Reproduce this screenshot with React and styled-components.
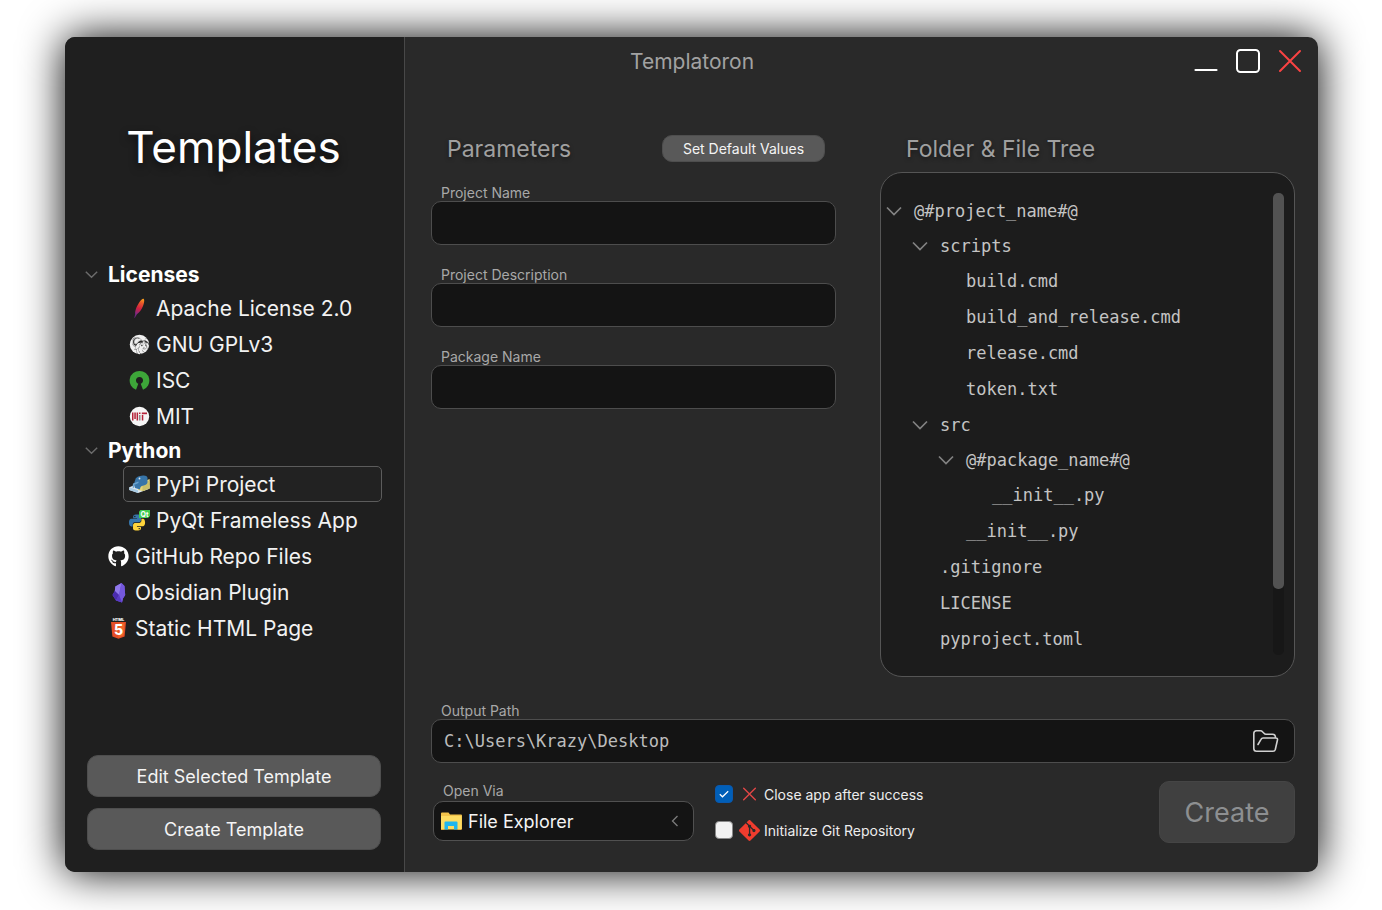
import React, { useState } from "react";
import styled, { createGlobalStyle, css } from "styled-components";
import { FaGithub } from "react-icons/fa";
import { SiGit, SiGnu } from "react-icons/si";

const sans = `Inter, "Liberation Sans", sans-serif`;
const mono = `"DejaVu Sans Mono", "Liberation Mono", monospace`;

const GlobalStyle = createGlobalStyle`
  *, *::before, *::after { box-sizing: border-box; }
  body { margin: 0; background: #ffffff; font-family: ${sans}; }
  button, input, select { font: inherit; color: inherit; margin: 0; }
  h1, h2, p, ul { margin: 0; padding: 0; font-weight: 400; }
  ul { list-style: none; }
`;

const Desktop = styled.div`
  display: flex;
  min-height: 100vh;
  padding: 37px 64px 38px 65px;
`;

const Window = styled.div`
  flex: 1;
  display: grid;
  grid-template-columns: 340px minmax(0, 1fr);
  border-radius: 10px;
  overflow: hidden;
  background: #292929;
  box-shadow: 0 0 44px #000000;
`;

/* ---------- Sidebar ---------- */

const Sidebar = styled.aside`
  display: flex;
  flex-direction: column;
  padding: 80px 22px 22px 20px;
  background: #1f1f1f;
  border-right: 1px solid #484848;
`;

const SidebarTitle = styled.h1`
  height: 60px;
  margin-bottom: 81px;
  font-size: 44px;
  line-height: 60px;
  text-align: center;
  color: #ffffff;
  text-shadow: 0 4px 8px rgba(0, 0, 0, 0.6);
`;

const TemplateList = styled.ul`
  flex: 1;
  font-size: 21px;
  color: #f2f2f2;
`;

const GroupButton = styled.button`
  display: flex;
  align-items: center;
  gap: 10px;
  height: 32px;
  padding: 0;
  border: 0;
  background: none;
  font-weight: 700;
  color: #ffffff;
`;

const TemplateItem = styled.li`
  padding-left: ${(p) => (p.$nested ? 38 : 17)}px;
`;

const TemplateButton = styled.button`
  display: flex;
  align-items: center;
  gap: 6px;
  width: 100%;
  height: 36px;
  padding: 0 5px;
  border: 1px solid ${(p) => (p.$selected ? "#5c5c5c" : "transparent")};
  border-radius: 5px;
  background: ${(p) => (p.$selected ? "#222222" : "none")};
  white-space: nowrap;

  svg {
    flex: none;
  }
`;

const SidebarActions = styled.div`
  display: grid;
  gap: 11px;
  padding: 0 1px 0 2px;
`;

const buttonFace = css`
  border: 1px solid #4e4e4e;
  background: #595959;
  color: #f4f4f4;
`;

const ActionButton = styled.button`
  ${buttonFace}
  height: 42px;
  border-radius: 11px;
  font-size: 18px;
`;

/* ---------- Main area ---------- */

const Main = styled.main`
  display: flex;
  flex-direction: column;
  min-width: 0;
  padding: 0 23px 29px 26px;
`;

const TitleBar = styled.header`
  display: flex;
  align-items: center;
  justify-content: space-between;
  height: 48px;
  padding-left: 199px;
`;

const AppTitle = styled.p`
  font-size: 21px;
  color: #a2a2a2;
`;

const WindowControls = styled.div`
  display: flex;
  gap: 18px;
  margin-right: -7px;
`;

const ControlButton = styled.button`
  display: flex;
  padding: 0;
  border: 0;
  background: none;
`;

const Columns = styled.div`
  flex: 1;
  display: grid;
  grid-template-columns: minmax(0, 405fr) minmax(0, 415fr);
  gap: 44px;
  padding: 50px 0 24px;
`;

const Column = styled.section`
  display: flex;
  flex-direction: column;
`;

const ColumnHead = styled.div`
  display: flex;
  align-items: center;
  justify-content: space-between;
  height: 27px;
  margin-bottom: ${(p) => p.$gap}px;
  padding: 0 11px 0 ${(p) => p.$inset}px;
`;

const Heading = styled.h2`
  font-size: 23px;
  line-height: 28px;
  color: #a0a0a0;
  text-shadow: 0 2px 4px rgba(0, 0, 0, 0.4);
`;

const SmallButton = styled.button`
  ${buttonFace}
  width: 163px;
  height: 27px;
  padding: 0;
  border-radius: 10px;
  font-size: 14px;
`;

const Field = styled.div`
  display: flex;
  flex-direction: column;
  margin-bottom: ${(p) => p.$after || 0}px;
`;

const FieldLabel = styled.label`
  height: 18px;
  padding-left: 10px;
  font-size: 14px;
  line-height: 20px;
  color: #a8a8a8;
`;

const FieldBox = styled.div`
  display: flex;
  align-items: center;
  height: 44px;
  padding: 0 15px 0 12px;
  border: 1px solid #4d4d4d;
  border-radius: 10px;
  background: #141414;
`;

const TextInput = styled.input`
  flex: 1;
  min-width: 0;
  padding: 0;
  border: 0;
  outline: 0;
  background: none;
  font-family: ${mono};
  font-size: 17px;
  color: #bcbcbc;
`;

const IconButton = styled.button`
  display: flex;
  padding: 0;
  border: 0;
  background: none;
`;

/* ---------- File tree ---------- */

const TreePanel = styled.div`
  flex: 1;
  display: flex;
  padding: 20px 10px 16px 5px;
  border: 1px solid #555555;
  border-radius: 22px;
  background: #1c1c1c;
`;

const TreeList = styled.ul`
  flex: 1;
  font-family: ${mono};
  font-size: 17px;
  color: #c4c4c4;
`;

const TreeRow = styled.li`
  display: flex;
  align-items: center;
  gap: 12px;
  height: ${(p) => (p.$folder ? 35 : 36)}px;
  padding-left: ${(p) => p.$depth * 26 + (p.$folder ? 0 : 28)}px;
  white-space: nowrap;
`;

const ScrollTrack = styled.div`
  width: 11px;
  height: 462px;
  border-radius: 5px;
  background: #171717;
`;

const ScrollThumb = styled.div`
  height: 396px;
  border-radius: 5px;
  background: #525252;
`;

/* ---------- Footer ---------- */

const Footer = styled.div`
  display: flex;
  align-items: flex-start;
  margin-top: 18px;
`;

const OpenVia = styled.div`
  width: 261px;
  margin: 0 21px 0 2px;
`;

const SelectBox = styled.div`
  display: flex;
  align-items: center;
  gap: 6px;
  height: 40px;
  margin-top: 2px;
  padding: 0 13px 0 6px;
  border: 1px solid #505050;
  border-radius: 10px;
  background: #141414;
`;

const Select = styled.select`
  flex: 1;
  min-width: 0;
  appearance: none;
  padding: 0;
  border: 0;
  outline: 0;
  background: none;
  font-size: 18px;
  color: #f4f4f4;
`;

const Options = styled.div`
  flex: 1;
  display: flex;
  flex-direction: column;
  align-items: flex-start;
  padding-top: 2px;
  gap: 14px;
`;

const OptionLabel = styled.label`
  display: flex;
  align-items: center;
  height: 22px;
  font-size: 14px;
  color: #ededed;

  > svg {
    width: 21px;
    margin: 0 4px 0 6px;
  }
`;

const CheckCell = styled.span`
  display: grid;
  place-items: center;

  > * {
    grid-area: 1 / 1;
  }

  svg {
    pointer-events: none;
  }
`;

const CheckInput = styled.input`
  appearance: none;
  width: 18px;
  height: 18px;
  border: 1px solid #8a8a8a;
  border-radius: 4px;
  background: #f3f3f3;

  &:checked {
    border-color: #0a58ad;
    background: #005fb8;
  }
`;

const CreateButton = styled.button`
  width: 136px;
  height: 62px;
  border: 1px solid #454545;
  border-radius: 10px;
  background: #404040;
  font-size: 27px;
  color: #8d8f91;
`;

/* ---------- Icons ---------- */

const Chevron = ({ size = 16, color = "#828282" }) => (
  <svg width={size} height={size} viewBox="0 0 16 16" fill="none" stroke={color} strokeWidth="1.7">
    <path d="M1 4.5l7 7 7-7" />
  </svg>
);

const ApacheIcon = () => (
  <svg width="21" height="21" viewBox="0 0 21 21">
    <defs>
      <linearGradient id="feather" x1="14" y1="1" x2="6" y2="20" gradientUnits="userSpaceOnUse">
        <stop offset="0" stopColor="#f9a11b" />
        <stop offset="0.2" stopColor="#ea5a2a" />
        <stop offset="0.5" stopColor="#d2203f" />
        <stop offset="0.8" stopColor="#7d2a86" />
        <stop offset="1" stopColor="#5a2070" />
      </linearGradient>
    </defs>
    <path d="M14.6.8c1 .7.8 4-.7 7.4-1.4 3.3-3.6 6.6-6 8L5.800 20l-.6-.2 1-3.6C5.800 12.500 8 7.600 10.500 4 12 1.800 13.500.4 14.600.8Z" fill="url(#feather)" />
  </svg>
);

const GnuIcon = () => (
  <svg width="21" height="21" viewBox="0 0 21 21">
    <circle cx="10.5" cy="10.5" r="9.7" fill="#f0f0f0" />
    <SiGnu x="3" y="3" width="15" height="15" color="#2a2a2a" />
  </svg>
);

const OsiIcon = () => (
  <svg width="21" height="21" viewBox="0 0 21 21">
    <path
      d="M10.5.9a9.7 9.7 0 0 0-3.5 18.8l2.300-6a3.500 3.500 0 1 1 2.400 0l2.300 6A9.700 9.700 0 0 0 10.500.9Z"
      fill="#3da639"
    />
  </svg>
);

const MitIcon = () => (
  <svg width="21" height="21" viewBox="0 0 21 21">
    <circle cx="10.5" cy="10.5" r="9.7" fill="#f6f6f6" />
    <g fill="#b5243a">
      <rect x="3" y="6.5" width="1.5" height="8" />
      <rect x="5.3" y="6.5" width="1.5" height="6.5" />
      <rect x="7.6" y="6.5" width="1.5" height="8" />
      <rect x="10" y="6.5" width="1.5" height="1.5" />
      <rect x="12.8" y="6.5" width="5.2" height="1.7" />
      <rect x="12.8" y="9" width="1.5" height="5.5" />
    </g>
    <rect x="10" y="9" width="1.5" height="5.5" fill="#8c8c8c" />
  </svg>
);

const snake =
  "M12 0C6 0 6.2 2.7 6.2 2.7v2.800h5.900v.9H3.900S0 5.900 0 12s3.400 5.800 3.400 5.800h2.100v-2.900s-.1-3.400 3.400-3.400h5.800s3.300 0 3.300-3.200V3.200S18.400 0 12 0ZM8.700 1.800a1.100 1.100 0 1 1 0 2.200 1.100 1.100 0 0 1 0-2.200Z";

const PypiIcon = () => (
  <svg width="21" height="21" viewBox="0 0 21 21">
    <path d="M.3 13.300 7 10.500l7.500 3 6-2.200v3.400L9 19 .3 16Z" fill="#dfe9f0" />
    <path d="M.3 13.300 9 16.200V19L.3 16Z" fill="#a9cbe4" />
    <path d="M9 9.500 20.600 5v9L14 17 9 16Z" fill="#e5d579" />
    <path d="M13.500 9.500 20.600 6.500V14.500L13.500 17.300Z" fill="#c9c06a" />
    <path d="M6.400 5.500C6.500 3.500 10 1.800 14 1.500c3-.2 4.500.8 4.500 2.500v4c0 2-1.500 2.800-4 3.600-2.500.8-3.500 1.500-3.500 4l-5-1.600c-1.200-2.500-1-5.500.4-8.500Z" fill="#3775a9" />
    <path d="M4 9.500 9.500 7.500v1.500L5 11v3L3.500 13.500Z" fill="#6ba3cf" />
    <circle cx="10.5" cy="4.5" r="0.9" fill="#dfe9f0" />
  </svg>
);

const PyQtIcon = () => (
  <svg width="21" height="21" viewBox="0 0 21 21">
    <g transform="translate(0 4.5) scale(.67)">
      <path d={snake} fill="#3776ab" />
      <path d={snake} fill="#ffd43b" transform="rotate(180 12 12)" />
    </g>
    <path d="M11.5 0H21v6l-2 2h-9V1.500Z" fill="#41cd52" />
    <text x="15.5" y="6.5" textAnchor="middle" fontFamily="Inter, sans-serif" fontSize="7" fontWeight="700" fill="#ffffff">
      Qt
    </text>
  </svg>
);

const ObsidianIcon = () => (
  <svg width="21" height="21" viewBox="0 0 21 21">
    <path d="M13.500 1 7.300 4.500 6.800 9 4.500 13l3.500 5.500 6 2 1-4 2.200-3.500L16.500 4Z" fill="#6c4bd8" />
    <path d="M13.500 1 7.300 4.500 6.800 9l4.200 4Z" fill="#8f78ea" />
    <path d="M4.500 13 8 18.500 11 13 6.800 9Z" fill="#4a2cae" />
    <path d="M13.500 1 11 13l3 7.500 1-4 2.200-3.500L16.500 4Z" fill="#7458dc" />
    <path d="M11 13l3 7.500-6-2Z" fill="#583ac4" />
  </svg>
);

const Html5Icon = () => (
  <svg width="21" height="21" viewBox="0 0 21 21">
    <text x="10.5" y="2.8" textAnchor="middle" fontFamily="Inter, sans-serif" fontSize="4" fontWeight="800" fill="#ffffff">
      HTML
    </text>
    <path d="M3 4h15l-1.400 14.500-6.100 2.300-6.100-2.300Z" fill="#e44d26" />
    <path d="M10.500 5.300h6l-1.100 12.200-4.900 1.900Z" fill="#f16529" />
    <text x="10.5" y="16.8" textAnchor="middle" fontFamily="Inter, sans-serif" fontSize="14" fontWeight="800" fill="#ffffff">
      5
    </text>
  </svg>
);

const ExplorerIcon = () => (
  <svg width="22" height="20" viewBox="0 0 22 20">
    <path d="M1 2.500Q1 1.500 2 1.500h6.500l1.500 2h11q1 0 1 1V18H1Z" fill="#f2c34b" />
    <path d="M1 5h20.500v13.500H1Z" fill="#fddc63" />
    <path d="M4.500 18.500V11.500q0-1 1-1h11q1 0 1 1v7H14V15H8v3.500Z" fill="#1fb6ef" />
    <path d="M1 18.500h3.500M17.500 18.500h4" stroke="#e3a93a" strokeWidth="1" />
  </svg>
);

const OpenFolderIcon = () => (
  <svg width="27" height="24" viewBox="0 0 27 24" fill="none" stroke="#d0d0d0" strokeWidth="1.6" strokeLinejoin="round" strokeLinecap="round">
    <path d="M6 15.500 9 10.300Q9.700 9 11 9H23.500Q26 9 25.400 11.300L23.300 20.500Q22.800 22.300 21 22.300H4.500Q1.800 22.300 1.800 19.500V4.500Q1.800 1.800 4.500 1.800H8.500Q9.700 1.800 10.500 2.700L12 4.300Q12.800 5.200 14 5.200H20.500Q23.500 5.200 23.500 8.800" />
  </svg>
);

const CrossIcon = ({ size, stroke, color }) => (
  <svg width={size} height={size} viewBox="0 0 24 24" stroke={color} strokeWidth={stroke} strokeLinecap="round">
    <path d="M2 2l20 20M22 2 2 22" />
  </svg>
);

/* ---------- Data ---------- */

const templates = [
  {
    group: "Licenses",
    items: [
      { name: "Apache License 2.0", Icon: ApacheIcon },
      { name: "GNU GPLv3", Icon: GnuIcon },
      { name: "ISC", Icon: OsiIcon },
      { name: "MIT", Icon: MitIcon },
    ],
  },
  {
    group: "Python",
    items: [
      { name: "PyPi Project", Icon: PypiIcon },
      { name: "PyQt Frameless App", Icon: PyQtIcon },
    ],
  },
];

const looseTemplates = [
  { name: "GitHub Repo Files", Icon: () => <FaGithub size={21} color="#ffffff" /> },
  { name: "Obsidian Plugin", Icon: ObsidianIcon },
  { name: "Static HTML Page", Icon: Html5Icon },
];

const fields = [
  { id: "project-name", label: "Project Name" },
  { id: "project-description", label: "Project Description" },
  { id: "package-name", label: "Package Name" },
];

const files = [
  { name: "@#project_name#@", depth: 0, folder: true },
  { name: "scripts", depth: 1, folder: true },
  { name: "build.cmd", depth: 2 },
  { name: "build_and_release.cmd", depth: 2 },
  { name: "release.cmd", depth: 2 },
  { name: "token.txt", depth: 2 },
  { name: "src", depth: 1, folder: true },
  { name: "@#package_name#@", depth: 2, folder: true },
  { name: "__init__.py", depth: 3 },
  { name: "__init__.py", depth: 2 },
  { name: ".gitignore", depth: 1 },
  { name: "LICENSE", depth: 1 },
  { name: "pyproject.toml", depth: 1 },
];

function TemplateEntry({ entry, nested, selected, onSelect }) {
  const { Icon, name } = entry;
  return (
    <TemplateItem $nested={nested}>
      <TemplateButton type="button" $selected={selected === name} onClick={() => onSelect(name)}>
        <Icon />
        {name}
      </TemplateButton>
    </TemplateItem>
  );
}

function Checkbox({ checked, onChange, icon, children }) {
  return (
    <OptionLabel>
      <CheckCell>
        <CheckInput type="checkbox" checked={checked} onChange={(e) => onChange(e.target.checked)} />
        {checked && (
          <svg width="10" height="10" viewBox="0 0 10 10" fill="none" stroke="#ffffff" strokeWidth="1.2">
            <path d="M.8 5.200l2.700 2.600L9.200 2.200" />
          </svg>
        )}
      </CheckCell>
      {icon}
      {children}
    </OptionLabel>
  );
}

export default function App() {
  const [selected, setSelected] = useState("PyPi Project");
  const [path, setPath] = useState("C:\\Users\\Krazy\\Desktop");
  const [closeAfter, setCloseAfter] = useState(true);
  const [initGit, setInitGit] = useState(false);

  return (
    <>
      <GlobalStyle />
      <Desktop>
        <Window>
          <Sidebar>
            <SidebarTitle>Templates</SidebarTitle>
            <TemplateList>
              {templates.map(({ group, items }) => (
                <li key={group}>
                  <GroupButton type="button">
                    <Chevron size={13} color="#6c6c6c" />
                    {group}
                  </GroupButton>
                  <ul>
                    {items.map((entry) => (
                      <TemplateEntry key={entry.name} entry={entry} nested selected={selected} onSelect={setSelected} />
                    ))}
                  </ul>
                </li>
              ))}
              {looseTemplates.map((entry) => (
                <TemplateEntry key={entry.name} entry={entry} selected={selected} onSelect={setSelected} />
              ))}
            </TemplateList>
            <SidebarActions>
              <ActionButton type="button">Edit Selected Template</ActionButton>
              <ActionButton type="button">Create Template</ActionButton>
            </SidebarActions>
          </Sidebar>

          <Main>
            <TitleBar>
              <AppTitle>Templatoron</AppTitle>
              <WindowControls>
                <ControlButton type="button" aria-label="Minimize">
                  <svg width="24" height="24" viewBox="0 0 24 24">
                    <path d="M1.5 21h21" stroke="#ffffff" strokeWidth="2.2" strokeLinecap="round" />
                  </svg>
                </ControlButton>
                <ControlButton type="button" aria-label="Maximize">
                  <svg width="24" height="24" viewBox="0 0 24 24">
                    <rect x="1" y="1" width="22" height="22" rx="3.5" fill="none" stroke="#ffffff" strokeWidth="2" />
                  </svg>
                </ControlButton>
                <ControlButton type="button" aria-label="Close">
                  <CrossIcon size={24} stroke={2} color="#fa4343" />
                </ControlButton>
              </WindowControls>
            </TitleBar>

            <Columns>
              <Column>
                <ColumnHead $gap={21} $inset={16}>
                  <Heading>Parameters</Heading>
                  <SmallButton type="button">Set Default Values</SmallButton>
                </ColumnHead>
                {fields.map(({ id, label }) => (
                  <Field key={id} $after={20}>
                    <FieldLabel htmlFor={id}>{label}</FieldLabel>
                    <FieldBox>
                      <TextInput id={id} type="text" />
                    </FieldBox>
                  </Field>
                ))}
              </Column>
              <Column>
                <ColumnHead $gap={10} $inset={26}>
                  <Heading>Folder &amp; File Tree</Heading>
                </ColumnHead>
                <TreePanel>
                  <TreeList>
                    {files.map(({ name, depth, folder }, i) => (
                      <TreeRow key={i} $depth={depth} $folder={folder}>
                        {folder && <Chevron />}
                        {name}
                      </TreeRow>
                    ))}
                  </TreeList>
                  <ScrollTrack>
                    <ScrollThumb />
                  </ScrollTrack>
                </TreePanel>
              </Column>
            </Columns>

            <Field>
              <FieldLabel htmlFor="output-path">Output Path</FieldLabel>
              <FieldBox>
                <TextInput id="output-path" type="text" value={path} onChange={(e) => setPath(e.target.value)} />
                <IconButton type="button" aria-label="Browse">
                  <OpenFolderIcon />
                </IconButton>
              </FieldBox>
            </Field>

            <Footer>
              <OpenVia>
                <Field>
                  <FieldLabel htmlFor="open-via">Open Via</FieldLabel>
                  <SelectBox>
                    <ExplorerIcon />
                    <Select id="open-via" defaultValue="File Explorer">
                      <option>File Explorer</option>
                    </Select>
                    <svg width="10" height="12" viewBox="0 0 10 12" fill="none" stroke="#7c7c7c" strokeWidth="1.3">
                      <path d="M7.5 1 2.500 6l5 5" />
                    </svg>
                  </SelectBox>
                </Field>
              </OpenVia>
              <Options>
                <Checkbox checked={closeAfter} onChange={setCloseAfter} icon={<CrossIcon size={14} stroke={2.4} color="#e04646" />}>
                  Close app after success
                </Checkbox>
                <Checkbox checked={initGit} onChange={setInitGit} icon={<SiGit size={21} color="#f03c2e" />}>
                  Initialize Git Repository
                </Checkbox>
              </Options>
              <CreateButton type="button">Create</CreateButton>
            </Footer>
          </Main>
        </Window>
      </Desktop>
    </>
  );
}
